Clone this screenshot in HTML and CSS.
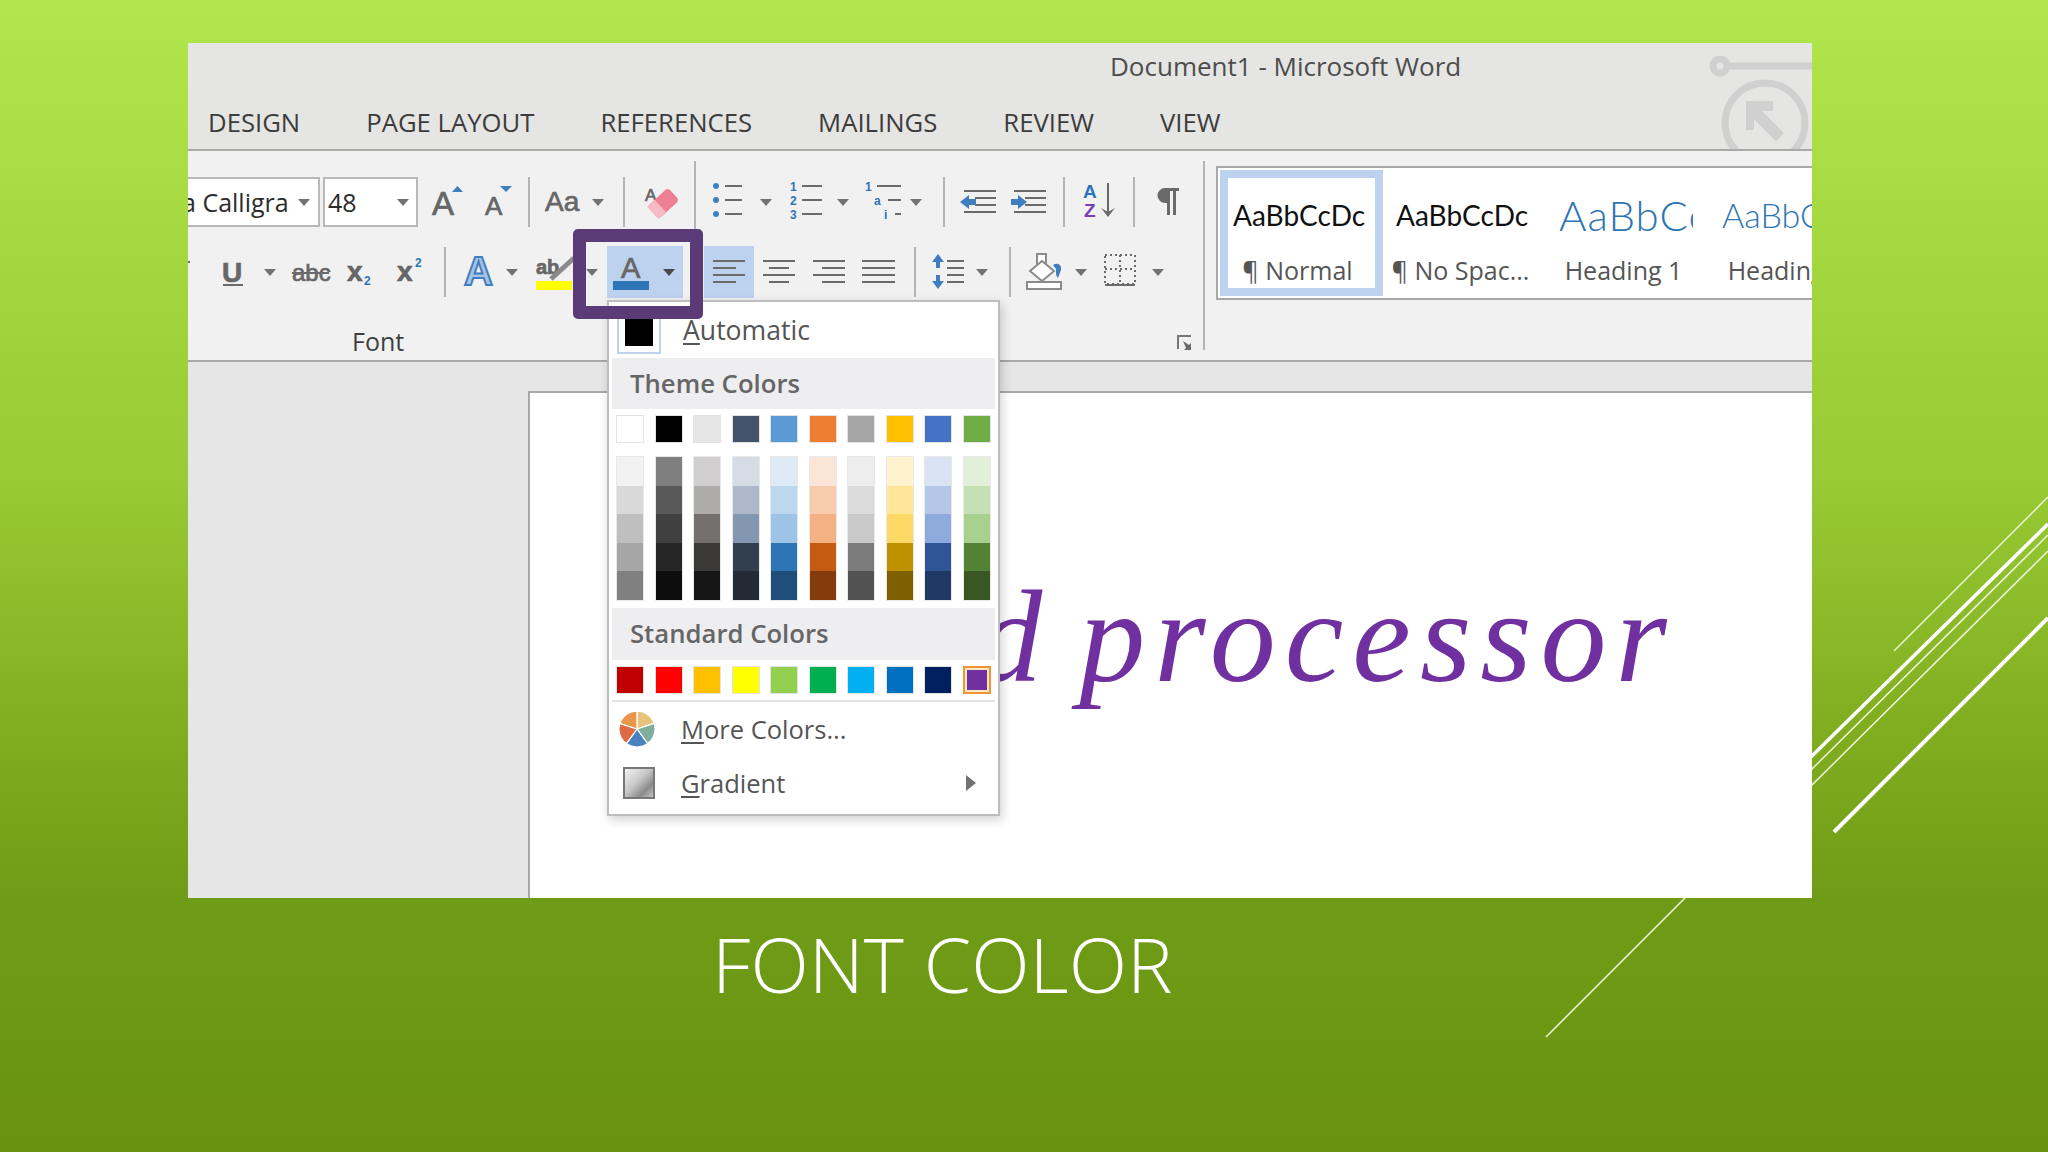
FILE: index.html
```html
<!DOCTYPE html>
<html lang="en">
<head>
<meta charset="utf-8">
<title>Font Color</title>
<link rel="stylesheet" href="styles.css">
</head>
<body>
<main class="slide">
  <svg class="deco" width="2048" height="1152" viewBox="0 0 2048 1152">
    <line class="thin" x1="1894" y1="651" x2="2048" y2="497"/>
    <line class="thick thick-a" x1="1700" y1="866" x2="2048" y2="524"/>
    <line class="thin" x1="1700" y1="880" x2="2048" y2="535"/>
    <line class="thin" x1="1700" y1="896" x2="2048" y2="551"/>
    <line class="thick" x1="1834" y1="832" x2="2048" y2="618"/>
    <line class="thin" x1="1690" y1="893" x2="1546" y2="1037"/>
  </svg>

  <section class="window">
    <header class="titlebar">
      <div class="doc-title">Document1 - Microsoft Word</div>
      <nav class="tabs">
        <span>DESIGN</span><span>PAGE LAYOUT</span><span>REFERENCES</span><span>MAILINGS</span><span>REVIEW</span><span>VIEW</span>
      </nav>
      <svg class="watermark" width="106" height="106" viewBox="0 0 106 106">
        <circle class="wm" cx="14" cy="23" r="7"/>
        <line class="wm" x1="21" y1="23" x2="106" y2="23"/>
        <circle class="wm" cx="59" cy="80" r="40"/>
        <path class="wm-fill" d="M40 58h27v10H56l22 22-8 8-22-22v11H40z"/>
      </svg>
    </header>

    <div class="ribbon">
      <div class="group group-font">
        <div class="row">
          <div class="combo combo-font"><span class="combo-text">a Calligraphy</span>
            <svg width="14" height="8" viewBox="0 0 14 8"><polygon class="caret" points="1,1 13,1 7,8"/></svg></div>
          <div class="combo combo-size"><span class="combo-text">48</span>
            <svg width="14" height="8" viewBox="0 0 14 8"><polygon class="caret" points="1,1 13,1 7,8"/></svg></div>
          <svg width="59" height="50" viewBox="0 0 59 50"><text class="glyph" x="14" y="38" font-size="33">A</text><polygon class="blue" points="34,15 45,15 39.5,9"/></svg>
          <svg width="51" height="50" viewBox="0 0 51 50"><text class="glyph" x="8" y="38" font-size="26">A</text><polygon class="blue" points="23,9 35,9 29,15"/></svg>
          <div class="sep"></div>
          <svg width="93" height="50" viewBox="0 0 93 50"><text class="glyph" x="15" y="34" font-size="28">Aa</text><polygon class="caret" points="62,22 74,22 68,29"/></svg>
          <div class="sep"></div>
          <svg width="69" height="50" viewBox="0 0 69 50">
            <text class="glyph" x="20" y="24" font-size="17">A</text>
            <g transform="rotate(-42 38 26)"><rect x="24" y="18" width="28" height="17" rx="4" fill="#ee7f95"/><rect x="24" y="18" width="10" height="17" fill="#f7b9c4"/></g>
          </svg>
        </div>
        <div class="row row-2">
          <svg width="95" height="50" viewBox="0 0 95 50"><line class="ln" x1="0" y1="15" x2="2" y2="15"/><text class="glyph bold" x="34" y="35" font-size="28">U</text><line class="ln" x1="35" y1="38" x2="55" y2="38"/><polygon class="caret" points="76,22 88,22 82,29"/></svg>
          <svg width="52" height="50" viewBox="0 0 52 50"><text class="glyph" x="9" y="34" font-size="24">abc</text><line class="ln" x1="9" y1="26" x2="46" y2="26"/></svg>
          <svg width="50" height="50" viewBox="0 0 50 50"><text class="glyph bold" x="12" y="34" font-size="28">x</text><text class="blue-t bold" x="29" y="38" font-size="12">2</text></svg>
          <svg width="59" height="50" viewBox="0 0 59 50"><text class="glyph bold" x="12" y="34" font-size="28">x</text><text class="blue-t bold" x="30" y="20" font-size="12">2</text></svg>
          <div class="sep"></div>
          <svg width="79" height="50" viewBox="0 0 79 50"><text class="effect" x="18" y="38" font-size="40">A</text><polygon class="caret" points="60,22 72,22 66,29"/></svg>
          <svg width="82" height="50" viewBox="0 0 82 50"><text class="glyph bold" x="11" y="27" font-size="20">ab</text><line class="pen" x1="26" y1="32" x2="49" y2="11"/><rect x="11" y="34" width="36" height="9" fill="#ffff00"/><polygon class="caret" points="61,22 73,22 67,29"/></svg>
          <svg class="hl" width="76" height="52" viewBox="0 -1 76 52"><text class="glyph" x="14" y="31" font-size="29">A</text><rect x="6" y="34" width="36" height="9" fill="#2e75b6"/><polygon class="caret dark" points="56,22 68,22 62,29"/></svg>
        </div>
        <div class="group-label">Font</div>
      </div>

      <div class="group group-para">
        <div class="row">
          <svg width="84" height="50" viewBox="0 0 84 50"><circle class="blue" cx="20" cy="9" r="3"/><circle class="blue" cx="20" cy="23" r="3"/><circle class="blue" cx="20" cy="37" r="3"/><line class="ln" x1="29" y1="9" x2="46" y2="9"/><line class="ln" x1="29" y1="23" x2="46" y2="23"/><line class="ln" x1="29" y1="37" x2="46" y2="37"/><polygon class="caret" points="64,22 76,22 70,29"/></svg>
          <svg width="75" height="50" viewBox="0 0 75 50"><text class="blue-t bold" x="10" y="14" font-size="12">1</text><text class="blue-t bold" x="10" y="28" font-size="12">2</text><text class="blue-t bold" x="10" y="42" font-size="12">3</text><line class="ln" x1="22" y1="9" x2="42" y2="9"/><line class="ln" x1="22" y1="23" x2="42" y2="23"/><line class="ln" x1="22" y1="37" x2="42" y2="37"/><polygon class="caret" points="57,22 69,22 63,29"/></svg>
          <svg width="88" height="50" viewBox="0 0 88 50"><text class="blue-t bold" x="10" y="14" font-size="12">1</text><text class="blue-t bold" x="19" y="28" font-size="12">a</text><text class="blue-t bold" x="29" y="42" font-size="12">i</text><line class="ln" x1="22" y1="9" x2="46" y2="9"/><line class="ln" x1="33" y1="23" x2="46" y2="23"/><line class="ln" x1="40" y1="37" x2="46" y2="37"/><polygon class="caret" points="55,22 67,22 61,29"/></svg>
          <div class="sep"></div>
          <svg width="58" height="50" viewBox="0 0 58 50"><line class="ln" x1="19" y1="14" x2="51" y2="14"/><line class="ln" x1="30" y1="21" x2="51" y2="21"/><line class="ln" x1="30" y1="28" x2="51" y2="28"/><line class="ln" x1="19" y1="35" x2="51" y2="35"/><path class="blue" d="M15 25l9-7v4h7v6h-7v4z"/></svg>
          <svg width="60" height="50" viewBox="0 0 60 50"><line class="ln" x1="11" y1="14" x2="43" y2="14"/><line class="ln" x1="22" y1="21" x2="43" y2="21"/><line class="ln" x1="22" y1="28" x2="43" y2="28"/><line class="ln" x1="11" y1="35" x2="43" y2="35"/><path class="blue" d="M24 25l-9-7v4H8v6h7v4z"/></svg>
          <div class="sep"></div>
          <svg width="68" height="50" viewBox="0 0 68 50"><text class="blue-t bold" x="18" y="21" font-size="19">A</text><text class="purple-t bold" x="19" y="40" font-size="19">Z</text><line class="ln" x1="43" y1="6" x2="43" y2="38"/><path class="ln-f" d="M36 31l7 9 7-9-7 4z"/></svg>
          <div class="sep"></div>
          <svg width="65" height="50" viewBox="0 0 65 50"><path class="ln-f" d="M30 11h14v3h-3v24h-3V14h-3v24h-3V26h-2a7.500 7.500 0 0 1 0-15z"/></svg>
        </div>
        <div class="row row-2 row-para">
          <svg class="hl" width="50" height="52" viewBox="0 -1 50 52"><line class="ln" x1="9" y1="14" x2="41" y2="14"/><line class="ln" x1="9" y1="21" x2="32" y2="21"/><line class="ln" x1="9" y1="28" x2="41" y2="28"/><line class="ln" x1="9" y1="35" x2="32" y2="35"/></svg>
          <svg width="50" height="50" viewBox="0 0 50 50"><line class="ln" x1="9" y1="14" x2="41" y2="14"/><line class="ln" x1="15" y1="21" x2="35" y2="21"/><line class="ln" x1="9" y1="28" x2="41" y2="28"/><line class="ln" x1="15" y1="35" x2="35" y2="35"/></svg>
          <svg width="50" height="50" viewBox="0 0 50 50"><line class="ln" x1="9" y1="14" x2="41" y2="14"/><line class="ln" x1="18" y1="21" x2="41" y2="21"/><line class="ln" x1="9" y1="28" x2="41" y2="28"/><line class="ln" x1="18" y1="35" x2="41" y2="35"/></svg>
          <svg width="60" height="50" viewBox="0 0 60 50"><line class="ln" x1="8" y1="14" x2="41" y2="14"/><line class="ln" x1="8" y1="21" x2="41" y2="21"/><line class="ln" x1="8" y1="28" x2="41" y2="28"/><line class="ln" x1="8" y1="35" x2="41" y2="35"/></svg>
          <div class="sep"></div>
          <svg width="93" height="50" viewBox="0 0 93 50"><path class="blue" d="M22 7l6 8h-4v6h-4v-6h-4z"/><path class="blue" d="M22 42l6-8h-4v-6h-4v6h-4z"/><line class="ln" x1="31" y1="14" x2="48" y2="14"/><line class="ln" x1="31" y1="21" x2="48" y2="21"/><line class="ln" x1="31" y1="28" x2="48" y2="28"/><line class="ln" x1="31" y1="35" x2="48" y2="35"/><polygon class="caret" points="60,22 72,22 66,29"/></svg>
          <div class="sep"></div>
          <svg width="79" height="50" viewBox="0 0 79 50"><rect class="bucket" x="26" y="7" width="9" height="14"/><polygon class="bucket" points="31,14 43,24 31,34 19,24"/><path class="blue" d="M42 18c5-3 9 0 8 5l-3 8-2-3v-6z"/><rect class="bucket" x="16" y="35" width="34" height="7"/><polygon class="caret" points="64,22 76,22 70,29"/></svg>
          <svg width="80" height="50" viewBox="0 0 80 50"><rect class="dots" x="15" y="8" width="30" height="29"/><line class="dots" x1="30" y1="8" x2="30" y2="37"/><line class="dots" x1="15" y1="22" x2="45" y2="22"/><line class="ln" x1="15" y1="38" x2="45" y2="38"/><polygon class="caret" points="62,22 74,22 68,29"/></svg>
        </div>
        <div class="launcher-row">
          <svg width="15" height="15" viewBox="0 0 15 15"><path class="launch" d="M1 14V1h13"/><path class="ln-f" d="M6 6l6 4 2-2v7H7l2-2z"/></svg>
        </div>
      </div>

      <div class="group-styles">
        <div class="gallery">
          <div class="style-item selected"><div class="sample">AaBbCcDcEe</div><div class="style-name">¶ Normal</div></div>
          <div class="style-item"><div class="sample">AaBbCcDcEe</div><div class="style-name">¶ No Spac...</div></div>
          <div class="style-item"><div class="sample h1">AaBbCcDd</div><div class="style-name">Heading 1</div></div>
          <div class="style-item"><div class="sample h2">AaBbCcDd</div><div class="style-name">Heading 2</div></div>
        </div>
      </div>
    </div>

    <div class="doc-area">
      <div class="paper"><div class="doc-text">d processor</div></div>
    </div>

    <div class="menu">
      <div class="auto-row">
        <div class="auto-swatch"><div class="auto-black"></div></div>
        <span class="menu-text auto-text"><u>A</u>utomatic</span>
      </div>
      <div class="menu-head">Theme Colors</div>
      <div class="swatches first">
        <div class="sw c-ffffff"></div><div class="sw c-000000"></div><div class="sw c-e7e6e6"></div><div class="sw c-44546a"></div><div class="sw c-5b9bd5"></div><div class="sw c-ed7d31"></div><div class="sw c-a5a5a5"></div><div class="sw c-ffc000"></div><div class="sw c-4472c4"></div><div class="sw c-70ad47"></div>
      </div>
      <div class="swatches shades">
        <div class="col"><i class="c-f2f2f2"></i><i class="c-d9d9d9"></i><i class="c-bfbfbf"></i><i class="c-a6a6a6"></i><i class="c-808080"></i></div>
        <div class="col"><i class="c-7f7f7f"></i><i class="c-595959"></i><i class="c-404040"></i><i class="c-262626"></i><i class="c-0d0d0d"></i></div>
        <div class="col"><i class="c-d0cece"></i><i class="c-aeabab"></i><i class="c-757070"></i><i class="c-3b3838"></i><i class="c-171616"></i></div>
        <div class="col"><i class="c-d6dce5"></i><i class="c-adb9ca"></i><i class="c-8497b0"></i><i class="c-323f4f"></i><i class="c-222a35"></i></div>
        <div class="col"><i class="c-deebf7"></i><i class="c-bdd7ee"></i><i class="c-9dc3e6"></i><i class="c-2e75b6"></i><i class="c-1f4e79"></i></div>
        <div class="col"><i class="c-fbe5d6"></i><i class="c-f8cbad"></i><i class="c-f4b183"></i><i class="c-c55a11"></i><i class="c-843c0c"></i></div>
        <div class="col"><i class="c-ededed"></i><i class="c-dbdbdb"></i><i class="c-c9c9c9"></i><i class="c-7b7b7b"></i><i class="c-525252"></i></div>
        <div class="col"><i class="c-fff2cc"></i><i class="c-ffe699"></i><i class="c-ffd966"></i><i class="c-bf9000"></i><i class="c-7f6000"></i></div>
        <div class="col"><i class="c-dae3f3"></i><i class="c-b4c7e7"></i><i class="c-8faadc"></i><i class="c-2f5597"></i><i class="c-203864"></i></div>
        <div class="col"><i class="c-e2f0d9"></i><i class="c-c5e0b4"></i><i class="c-a9d18e"></i><i class="c-548235"></i><i class="c-385723"></i></div>
      </div>
      <div class="menu-head head-std">Standard Colors</div>
      <div class="swatches std">
        <div class="sw c-c00000"></div><div class="sw c-ff0000"></div><div class="sw c-ffc000"></div><div class="sw c-ffff00"></div><div class="sw c-92d050"></div><div class="sw c-00b050"></div><div class="sw c-00b0f0"></div><div class="sw c-0070c0"></div><div class="sw c-002060"></div><div class="sw c-7030a0 picked"></div>
      </div>
      <div class="menu-sep"></div>
      <div class="menu-row">
        <svg class="pie" width="36" height="36" viewBox="0 0 34 34">
          <path class="wedge" fill="#e9c27e" d="M17 17V0a17 17 0 0 1 16.200 11.700z"/>
          <path class="wedge" fill="#7fae9a" d="M17 17l16.200-5.300A17 17 0 0 1 27 30.800z"/>
          <path class="wedge" fill="#4a82c0" d="M17 17l10 13.800a17 17 0 0 1-20 0z"/>
          <path class="wedge" fill="#dc6a45" d="M17 17L7 30.800A17 17 0 0 1 .8 11.700z"/>
          <path class="wedge" fill="#e8964a" d="M17 17L.8 11.700A17 17 0 0 1 17 0z"/>
        </svg>
        <span class="menu-text"><u>M</u>ore Colors...</span>
      </div>
      <div class="menu-row">
        <div class="grad"></div>
        <span class="menu-text"><u>G</u>radient</span>
        <svg class="submenu" width="10" height="16" viewBox="0 0 10 16"><polygon class="caret" points="0,0 10,8 0,16"/></svg>
      </div>
    </div>

    <div class="callout"></div>
  </section>

  <h1 class="slide-title">FONT COLOR</h1>
</main>
</body>
</html>
```

FILE: styles.css
```css
* { box-sizing: border-box; }
html, body { margin: 0; padding: 0; }
body { width: 2048px; height: 1152px; overflow: hidden; font-family: "Open Sans", sans-serif; }

.slide {
  position: relative;
  width: 2048px;
  height: 1152px;
  padding: 43px 0 0 188px;
  overflow: hidden;
  background: linear-gradient(180deg, #b1e74c 0%, #97ca34 42%, #7fab1f 65%, #6f9c17 78%, #69930f 100%);
}
.deco { position: absolute; left: 0; top: 0; }
.thin { stroke: #eef6d8; stroke-width: 1.500; }
.thick { stroke: #ffffff; stroke-width: 4; }
.thick-a { stroke-width: 3.500; }

.window {
  position: relative;
  width: 1624px;
  height: 855px;
  display: flex;
  flex-direction: column;
  overflow: hidden;
  background: #e6e6e6;
  color: #444;
}

/* title bar */
.titlebar { position: relative; height: 108px; flex: none; background: #e5e5e4; border-bottom: 2px solid #a8a8a8; }
.doc-title { padding: 5px 0 0 922px; font-size: 26px; line-height: 36px; color: #4d4d4d; white-space: nowrap; }
.tabs { display: flex; gap: 66px; padding: 21px 0 0 20px; font-size: 25.700px; line-height: 36px; color: #3c3c3c; white-space: nowrap; }
.watermark { position: absolute; right: 0; top: 0; }
.wm { fill: none; stroke: #d0d0d0; stroke-width: 7; }
.wm-fill { fill: #d0d0d0; }

/* ribbon */
.ribbon { display: flex; height: 211px; flex: none; padding-top: 10px; background: #f1f1f2; border-bottom: 2px solid #a8a8a8; }
.group { height: 189px; padding-top: 16px; flex: none; border-right: 2px solid #b4b4b4; }
.group-font { width: 508px; }
.group-para { width: 509px; }
.row { display: flex; align-items: flex-start; height: 50px; }
.row svg { flex: none; display: block; }
.row-2 { margin-top: 20px; }
.row-para { padding-left: 8px; }
.sep { width: 2px; height: 50px; flex: none; background: #b4b4b4; }
.hl { background: #bcd2ef; margin-top: -1px; }

.combo { display: flex; align-items: center; height: 50px; background: #fff; border: 2px solid #b8b8b8; overflow: hidden; flex: none; font-size: 25px; color: #2c2c2c; }
.combo-font { width: 132px; border-left: 0; margin-right: 3px; }
.combo-font .combo-text { width: 107px; margin-left: -6px; margin-right: 8px; overflow: hidden; white-space: nowrap; flex: none; }
.combo-size { width: 95px; padding: 0 6px 0 3px; justify-content: space-between; }

.glyph { fill: #676767; stroke: #676767; stroke-width: .7; font-family: "Liberation Sans", sans-serif; }
.bold { font-weight: 700; font-family: "Liberation Sans", sans-serif; }
.caret { fill: #727272; }
.caret.dark { fill: #4a4a4a; }
.blue { fill: #3f7fbf; }
.blue-t { fill: #2e75b6; }
.purple-t { fill: #7a3fb0; }
.ln { stroke: #6a6a6a; stroke-width: 2; }
.ln-f { fill: #6a6a6a; }
.pen { stroke: #8a8a8a; stroke-width: 5; }
.effect { fill: #a9c4e2; stroke: #3f7fbf; stroke-width: 2; font-weight: 700; font-family: "Liberation Sans", sans-serif; }
.bucket { fill: #fff; stroke: #8a8a8a; stroke-width: 2; }
.dots { fill: none; stroke: #6a6a6a; stroke-width: 2; stroke-dasharray: 2 3; }
.launch { fill: none; stroke: #777; stroke-width: 2; }
.wedge { stroke: #fff; stroke-width: 1.200; }

.group-label { height: 53px; padding: 27px 0 0 164px; font-size: 25px; line-height: 34px; color: #3f3f3f; }
.launcher-row { display: flex; justify-content: flex-end; padding: 38px 11px 0 0; }

/* styles gallery */
.group-styles { flex: 1; min-width: 0; padding: 5px 0 0 11px; }
.gallery { display: flex; height: 134px; padding: 2px 0 2px 2px; background: #fff; border: 2px solid #a8a8a8; border-right: 0; }
.style-item { width: 163px; flex: none; height: 126px; border: 8px solid transparent; }
.selected { border-color: #bcd2ef; }
.sample { height: 74px; margin: 0 0 2px 5px; line-height: 74px; width: 134px; overflow: hidden; white-space: nowrap; font-family: Lato, sans-serif; font-size: 28px; color: #111; }
.h1 { font-size: 42px; font-weight: 300; letter-spacing: 1px; color: #2e74b5; }
.h2 { font-size: 34px; font-weight: 300; color: #2e74b5; }
.style-name { height: 32px; padding-right: 8px; line-height: 32px; font-size: 25px; color: #555; text-align: center; white-space: nowrap; }

/* document */
.doc-area { flex: 1; padding: 29px 0 0 340px; }
.paper { height: 100%; background: #fff; border-top: 2px solid #a8a8a8; border-left: 2px solid #a8a8a8; }
.doc-text { padding: 158px 136px 0 0; text-align: right; font-family: "Liberation Serif", serif; font-style: italic; font-size: 132px; line-height: 172px; letter-spacing: 9px; word-spacing: -14px; color: #7030a0; white-space: nowrap; }

/* colour menu */
.menu {
  position: absolute;
  left: 419px;
  top: 257px;
  width: 393px;
  height: 516px;
  background: #fff;
  border: 2px solid #bdbdbd;
  box-shadow: 2px 4px 10px rgba(0, 0, 0, .18);
  color: #555;
}
.auto-row { display: flex; align-items: center; height: 56px; padding-left: 8px; }
.auto-swatch { width: 44px; height: 44px; margin-top: 3px; padding: 6px; border: 2px solid #bcd2ef; flex: none; }
.auto-black { height: 100%; background: #000; }
.menu-text { margin-left: 22px; font-size: 25.500px; line-height: 34px; white-space: nowrap; }
.auto-text { font-size: 26.600px; }
.menu-text u { text-underline-offset: 3px; }
.menu-head { height: 51px; margin: 0 3px; padding-left: 18px; background: #eeeef0; font-size: 25.700px; font-weight: 600; line-height: 51px; color: #666; white-space: nowrap; }
.head-std { height: 52px; margin-top: 7px; line-height: 52px; }
.swatches { display: flex; gap: 10.500px; padding-left: 7px; }
.first { margin-top: 6px; }
.shades { margin-top: 13px; }
.std { margin-top: 6px; }
.sw { width: 28px; height: 28px; flex: none; border: 1px solid #e3e3e3; }
.col { width: 28px; height: 145px; flex: none; display: flex; flex-direction: column; border: 1px solid #e8e8e8; }
.col i { flex: 1; display: block; }
.picked { border: 2px solid #f29436; box-shadow: inset 0 0 0 2px #fde9c9; }
.menu-sep { height: 2px; margin: 6px 3px 0; background: #e2e2e2; }
.menu-row { display: flex; align-items: center; height: 54px; padding-left: 10px; }
.pie { flex: none; }
.menu-row .menu-text { margin-left: 26px; }
.grad { width: 32px; height: 32px; margin-left: 4px; flex: none; border: 2px solid #777; background: linear-gradient(135deg, #f2f2f2 0%, #c8c8c8 45%, #8a8a8a 75%, #c4c4c4 100%); }
.submenu { margin-left: auto; margin-right: 22px; flex: none; }

/* highlight */
.callout { position: absolute; left: 385px; top: 186px; width: 130px; height: 90px; border: 13px solid #5b3a78; border-radius: 5px; }

.slide-title { position: relative; margin: 15px 0 0 524px; font-size: 76.400px; font-weight: 350; line-height: 100px; color: #fff; white-space: nowrap; }

/* swatch colours */
.c-ffffff { background: #ffffff; } .c-000000 { background: #000000; } .c-e7e6e6 { background: #e7e6e6; } .c-44546a { background: #44546a; } .c-5b9bd5 { background: #5b9bd5; } .c-ed7d31 { background: #ed7d31; } .c-a5a5a5 { background: #a5a5a5; } .c-ffc000 { background: #ffc000; } .c-4472c4 { background: #4472c4; } .c-70ad47 { background: #70ad47; }
.c-f2f2f2 { background: #f2f2f2; } .c-d9d9d9 { background: #d9d9d9; } .c-bfbfbf { background: #bfbfbf; } .c-a6a6a6 { background: #a6a6a6; } .c-808080 { background: #808080; }
.c-7f7f7f { background: #7f7f7f; } .c-595959 { background: #595959; } .c-404040 { background: #404040; } .c-262626 { background: #262626; } .c-0d0d0d { background: #0d0d0d; }
.c-d0cece { background: #d0cece; } .c-aeabab { background: #aeabab; } .c-757070 { background: #757070; } .c-3b3838 { background: #3b3838; } .c-171616 { background: #171616; }
.c-d6dce5 { background: #d6dce5; } .c-adb9ca { background: #adb9ca; } .c-8497b0 { background: #8497b0; } .c-323f4f { background: #323f4f; } .c-222a35 { background: #222a35; }
.c-deebf7 { background: #deebf7; } .c-bdd7ee { background: #bdd7ee; } .c-9dc3e6 { background: #9dc3e6; } .c-2e75b6 { background: #2e75b6; } .c-1f4e79 { background: #1f4e79; }
.c-fbe5d6 { background: #fbe5d6; } .c-f8cbad { background: #f8cbad; } .c-f4b183 { background: #f4b183; } .c-c55a11 { background: #c55a11; } .c-843c0c { background: #843c0c; }
.c-ededed { background: #ededed; } .c-dbdbdb { background: #dbdbdb; } .c-c9c9c9 { background: #c9c9c9; } .c-7b7b7b { background: #7b7b7b; } .c-525252 { background: #525252; }
.c-fff2cc { background: #fff2cc; } .c-ffe699 { background: #ffe699; } .c-ffd966 { background: #ffd966; } .c-bf9000 { background: #bf9000; } .c-7f6000 { background: #7f6000; }
.c-dae3f3 { background: #dae3f3; } .c-b4c7e7 { background: #b4c7e7; } .c-8faadc { background: #8faadc; } .c-2f5597 { background: #2f5597; } .c-203864 { background: #203864; }
.c-e2f0d9 { background: #e2f0d9; } .c-c5e0b4 { background: #c5e0b4; } .c-a9d18e { background: #a9d18e; } .c-548235 { background: #548235; } .c-385723 { background: #385723; }
.c-c00000 { background: #c00000; } .c-ff0000 { background: #ff0000; } .c-ffff00 { background: #ffff00; } .c-92d050 { background: #92d050; } .c-00b050 { background: #00b050; } .c-00b0f0 { background: #00b0f0; } .c-0070c0 { background: #0070c0; } .c-002060 { background: #002060; } .c-7030a0 { background: #7030a0; }
```
